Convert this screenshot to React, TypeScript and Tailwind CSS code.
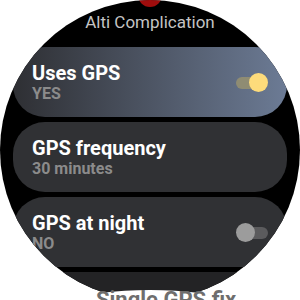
import React from 'react'

type Row = {
  title: string
  value: string
  toggle?: 'on' | 'off'
  active?: boolean
}

const rows: Row[] = [
  { title: 'Uses GPS', value: 'YES', toggle: 'on', active: true },
  { title: 'GPS frequency', value: '30 minutes' },
  { title: 'GPS at night', value: 'NO', toggle: 'off' }
]

function Toggle({ on }: { on: boolean }) {
  return (
    <div className="relative h-[19px] w-[32px] shrink-0">
      <div
        className={
          on
            ? 'absolute left-0 top-[4px] h-[12px] w-[27px] rounded-full bg-[#8f8c73]'
            : 'absolute right-0 top-[4px] h-[12px] w-[27px] rounded-full bg-[#5b5b5d]'
        }
      />
      <div
        className={
          on
            ? 'absolute right-0 top-0 h-[19px] w-[19px] rounded-full bg-[#fddb7b]'
            : 'absolute left-0 top-0 h-[19px] w-[19px] rounded-full bg-[#9c9c9c]'
        }
      />
    </div>
  )
}

function SettingRow({ row }: { row: Row }) {
  return (
    <div
      className={
        row.active
          ? 'flex h-[70px] w-full items-center justify-between rounded-[32px] bg-[linear-gradient(to_right,#2e2f33,#6c7b95)] pl-[19px] pr-[19px]'
          : 'flex h-[70px] w-full items-center justify-between rounded-[32px] bg-[#303134] pl-[19px] pr-[19px]'
      }
    >
      <div className="flex flex-col">
        <span className="text-[20px] font-bold leading-6 text-white">{row.title}</span>
        <span className="text-[16px] font-bold leading-[18px] text-[#8b8b8b]">{row.value}</span>
      </div>
      {row.toggle && <Toggle on={row.toggle === 'on'} />}
    </div>
  )
}

export default function App() {
  return (
    <div
      className="relative h-[300px] w-[300px] overflow-hidden bg-white"
      style={{ fontFamily: 'Roboto, "Noto Sans", sans-serif' }}
    >
      <div className="relative flex h-[300px] w-[300px] flex-col items-center overflow-hidden rounded-full bg-black">
        <div className="pt-[12px] text-[17px] leading-5 text-[#c4c4c4]">Alti Complication</div>

        <div className="mt-[15px] flex w-[274px] flex-col gap-[5px]">
          {rows.map(r => (
            <SettingRow
              key={r.title}
              row={r}
            />
          ))}
          <div className="h-[70px] w-full rounded-[32px] bg-[#232325]" />
        </div>

        {/* red dot peeking at the top */}
        <div className="absolute left-[138px] top-[-17px] h-6 w-6 rounded-full bg-[#a00d0d]" />
      </div>

      {/* bottom edge fade */}
      <div className="absolute left-[20px] top-[290px] h-[80px] w-[260px] rounded-[50%] bg-white" />
      <div className="absolute left-[96px] top-[289px] whitespace-nowrap text-[22px] font-bold leading-none text-[#6e6e6e]">
        Single GPS fix
      </div>
    </div>
  )
}
